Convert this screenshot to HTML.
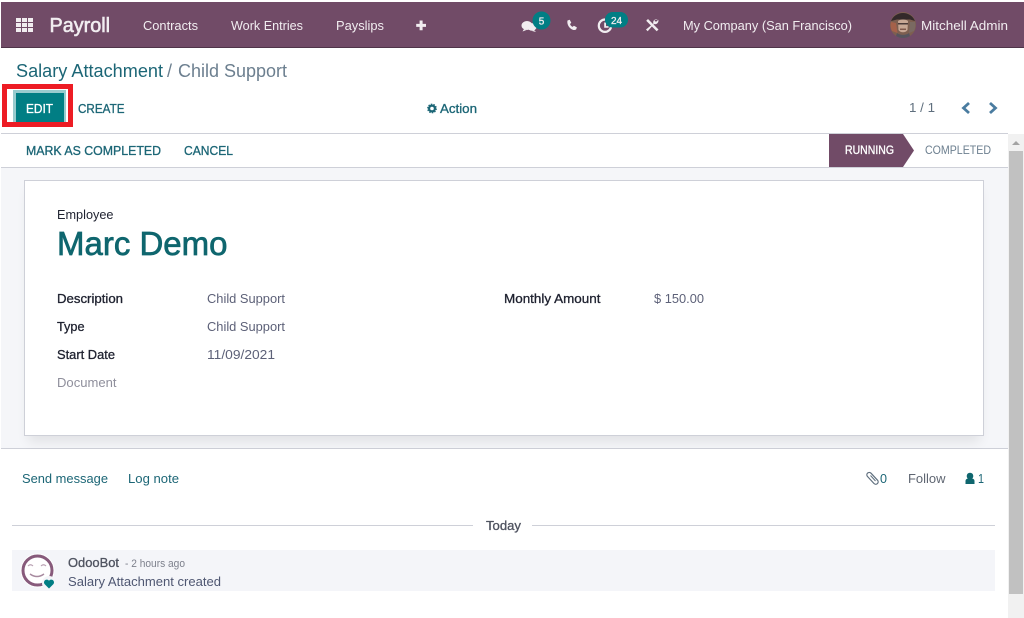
<!DOCTYPE html>
<html><head><meta charset="utf-8"><style>
html,body{margin:0;padding:0;background:#fff;width:1024px;height:618px;overflow:hidden}
svg{display:block}
text{font-family:"Liberation Sans",sans-serif;font-size:13px}
.m{stroke-width:.32px}
.t{fill:#1c6676;stroke:#1c6676}
.d{fill:#1f2230;stroke:#1f2230}
.w{fill:#fff;stroke:#fff}
.g{fill:#4f5360;stroke:#4f5360}
</style></head><body>
<svg width="1024" height="618" viewBox="0 0 1024 618" xmlns="http://www.w3.org/2000/svg">
<defs><filter id="s" x="-5%" y="-10%" width="110%" height="125%"><feGaussianBlur stdDeviation="6"/></filter></defs>
<rect width="1024" height="618" fill="#fff"/>
<!-- nav -->
<rect x="1" y="2" width="1023" height="45" fill="#714b67"/>
<rect x="1" y="47" width="1023" height="1" fill="#4f3449"/>
<g fill="#f1edf0">
<rect x="16" y="18" width="5" height="4"/><rect x="22" y="18" width="5" height="4"/><rect x="28" y="18" width="5" height="4"/>
<rect x="16" y="23" width="5" height="4"/><rect x="22" y="23" width="5" height="4"/><rect x="28" y="23" width="5" height="4"/>
<rect x="16" y="28" width="5" height="4"/><rect x="22" y="28" width="5" height="4"/><rect x="28" y="28" width="5" height="4"/>
</g>
<text x="49.5" y="32" style="font-size:20px;stroke-width:.6px" fill="#f1edf0" stroke="#f1edf0" textLength="60.5" lengthAdjust="spacingAndGlyphs">Payroll</text>
<g fill="#f1edf0">
<text x="143" y="30" textLength="55" lengthAdjust="spacingAndGlyphs" fill="#f1edf0">Contracts</text>
<text x="231" y="30" textLength="72" lengthAdjust="spacingAndGlyphs" fill="#f1edf0">Work Entries</text>
<text x="336" y="30" textLength="48" lengthAdjust="spacingAndGlyphs" fill="#f1edf0">Payslips</text>
<path d="M419.6 20.5h3v3.4h3.4v3h-3.4v3.4h-3v-3.4h-3.4v-3h3.4z"/>
<!-- chat -->
<ellipse cx="527" cy="25.5" rx="5.5" ry="4.5"/><path d="M524 29l-1.5 2.500 4-1.500z"/>
<ellipse cx="532" cy="27" rx="4.5" ry="3.700"/><path d="M534 30l2 2-4-1z"/>
<!-- phone -->
<path d="M567.500 20.500l2.200-.8 1.600 3-1.300 1.300c.5 1.400 1.300 2.300 2.600 2.900l1.300-1.200 3 1.700-.8 2.100c-1.500.9-3.500.6-5.400-.9-2.600-2-3.800-5.400-3.200-8.100z"/>
<!-- activity clock -->
<path d="M605 19.500a6.200 6.200 0 1 0 6.200 6.200" fill="none" stroke="#f1edf0" stroke-width="2.200"/>
<path d="M604.200 22.500h1.800v3.600h2.600v1.600h-4.400z"/>
<!-- tools -->
<path d="M646.500 20.500l1.500-1.500 10.500 10.500-1.800 1.800-10.500-10.500z"/>
<path d="M657.800 19.200a3.400 3.400 0 0 0-4.400 4.300l-7.400 6 1.700 1.700 6.300-7.200a3.400 3.400 0 0 0 4.300-4.200l-2 1.800-1.400-.4-.3-1.300z"/>
<text x="683" y="30" textLength="169" lengthAdjust="spacingAndGlyphs" fill="#f1edf0">My Company (San Francisco)</text>
<text x="921" y="30" textLength="87" lengthAdjust="spacingAndGlyphs" fill="#f1edf0">Mitchell Admin</text>
</g>
<!-- badges -->
<circle cx="541.5" cy="20.5" r="9" fill="#017e84"/>
<text x="541.5" y="24.5" style="font-size:10px;stroke-width:.3px" fill="#f1edf0" stroke="#f1edf0" text-anchor="middle">5</text>
<rect x="605" y="12" width="23" height="15.5" rx="7.700" fill="#017e84"/>
<text x="616.5" y="24" style="font-size:10px;stroke-width:.3px" fill="#f1edf0" stroke="#f1edf0" text-anchor="middle">24</text>
<!-- avatar -->
<circle cx="903" cy="25" r="13" fill="#7d5f50"/>
<path d="M891 21a13 13 0 0 1 24 0l-5-1.500h-13z" fill="#33292a"/>
<path d="M898 21c2-2 8-2 10 0l-.5 9c-2 3-7 3-9 0z" fill="#c7a794"/>
<path d="M892 31a13 13 0 0 1-1-9l5 1 1.500 10z" fill="#a5614a"/>
<path d="M914 31a13 13 0 0 0 1-9l-5 0-1 11z" fill="#7a6a62"/>
<path d="M897 33c3 2.500 9 2.500 12 0l1 3a13 13 0 0 1-14 0z" fill="#55545e"/>
<rect x="898" y="23" width="10" height="1.500" fill="#4a3a38"/>
<rect x="900" y="28.500" width="6" height="1.500" fill="#80594c"/>
<!-- breadcrumb -->
<text x="16" y="77" style="font-size:18px" fill="#1c6676" textLength="147" lengthAdjust="spacingAndGlyphs">Salary Attachment</text>
<text x="167" y="77" style="font-size:18px" fill="#6c7f8f">/</text>
<text x="178" y="77" style="font-size:18px" fill="#6c7f8f" textLength="109" lengthAdjust="spacingAndGlyphs">Child Support</text>
<!-- edit -->
<rect x="4.500" y="86.500" width="66" height="38" fill="#fff" stroke="#ed1c24" stroke-width="5"/>
<rect x="13" y="90" width="53" height="32" fill="#99cbce"/>
<rect x="16" y="93" width="48" height="29" fill="#017e84"/>
<text x="26" y="113" class="m w" style="font-size:13px" textLength="27" lengthAdjust="spacingAndGlyphs">EDIT</text>
<text x="78" y="113" class="m t" textLength="46.500" lengthAdjust="spacingAndGlyphs">CREATE</text>
<!-- action -->
<circle cx="432" cy="108.500" r="2.900" fill="none" stroke="#1c6676" stroke-width="2.200"/>
<circle cx="432" cy="108.500" r="4.300" fill="none" stroke="#1c6676" stroke-width="1.200" stroke-dasharray="1.500 1.200"/>
<text x="440" y="113" class="m t" textLength="37" lengthAdjust="spacingAndGlyphs">Action</text>
<!-- pager -->
<text x="909" y="112" fill="#5f6f7e" textLength="26" lengthAdjust="spacingAndGlyphs">1 / 1</text>
<path d="M969 103l-5.500 5 5.500 5" fill="none" stroke="#4a7ca0" stroke-width="2.800"/>
<path d="M990 103l5.500 5-5.500 5" fill="none" stroke="#4a7ca0" stroke-width="2.800"/>
<!-- status bar -->
<rect x="1" y="133" width="1007" height="1" fill="#ced0d8"/>
<rect x="1" y="167" width="1007" height="1" fill="#ced0d8"/>
<text x="26" y="155" class="m t" textLength="135" lengthAdjust="spacingAndGlyphs">MARK AS COMPLETED</text>
<text x="184" y="155" class="m t" textLength="49" lengthAdjust="spacingAndGlyphs">CANCEL</text>
<path d="M829 134h74l11 16.500-11 16.500h-74z" fill="#714b67"/>
<text x="845" y="154" class="m w" style="font-size:11.500px" textLength="49" lengthAdjust="spacingAndGlyphs">RUNNING</text>
<text x="925" y="154" fill="#6c7f8f" style="font-size:11.500px" textLength="66" lengthAdjust="spacingAndGlyphs">COMPLETED</text>
<!-- sheet bg -->
<rect x="1" y="168" width="1007" height="280" fill="#f5f6f9"/>
<rect x="1" y="448" width="1007" height="1" fill="#ced0d8"/>
<rect x="28" y="190" width="952" height="252" fill="#000" opacity=".08" filter="url(#s)"/>
<rect x="1" y="449" width="1007" height="169" fill="#fff"/>
<rect x="24.500" y="180.500" width="959" height="255" fill="#fff" stroke="#ced0d8"/>
<text x="57" y="219" fill="#1f2230" textLength="56.500" lengthAdjust="spacingAndGlyphs">Employee</text>
<text x="57" y="255" style="font-size:33px;stroke-width:.7px" fill="#0f666e" stroke="#0f666e" textLength="170.500" lengthAdjust="spacingAndGlyphs">Marc Demo</text>
<text x="57" y="303" class="m d" textLength="66" lengthAdjust="spacingAndGlyphs">Description</text>
<text x="57" y="331" class="m d" textLength="27.500" lengthAdjust="spacingAndGlyphs">Type</text>
<text x="57" y="359" class="m d" textLength="58" lengthAdjust="spacingAndGlyphs">Start Date</text>
<text x="57" y="387" fill="#8f8f9c" textLength="59.500" lengthAdjust="spacingAndGlyphs">Document</text>
<text x="207" y="303" fill="#5d6178" textLength="78" lengthAdjust="spacingAndGlyphs">Child Support</text>
<text x="207" y="331" fill="#5d6178" textLength="78" lengthAdjust="spacingAndGlyphs">Child Support</text>
<text x="207" y="359" fill="#5d6178" textLength="68" lengthAdjust="spacingAndGlyphs">11/09/2021</text>
<text x="504" y="303" class="m d" textLength="96.500" lengthAdjust="spacingAndGlyphs">Monthly Amount</text>
<text x="654" y="303" fill="#5d6178" textLength="50" lengthAdjust="spacingAndGlyphs">$ 150.00</text>
<!-- chatter -->
<text x="22" y="483" fill="#1c6676" textLength="86" lengthAdjust="spacingAndGlyphs">Send message</text>
<text x="128" y="483" fill="#1c6676" textLength="51" lengthAdjust="spacingAndGlyphs">Log note</text>
<path d="M867.500 476.500l6.500 7a2.400 2.400 0 0 0 3.500-3.300l-6.500-7a2 2 0 0 0-3.500 3.300z" fill="none" stroke="#5f6f7e" stroke-width="1.200"/>
<path d="M870.500 475.500l5 5.500" fill="none" stroke="#5f6f7e" stroke-width="1"/>
<text x="880" y="483" fill="#1c6676" textLength="7" lengthAdjust="spacingAndGlyphs">0</text>
<text x="908" y="483" fill="#5f6672" textLength="37.500" lengthAdjust="spacingAndGlyphs">Follow</text>
<circle cx="970" cy="476" r="3.300" fill="#0f666e"/>
<path d="M965.500 484v-3c0-1.600 1.500-2.500 2.800-2.500h3.400c1.300 0 2.800.9 2.800 2.500v3z" fill="#0f666e"/>
<text x="978" y="483" fill="#1c6676" textLength="6" lengthAdjust="spacingAndGlyphs">1</text>
<rect x="12" y="525" width="461" height="1" fill="#ced0d8"/>
<rect x="532" y="525" width="463" height="1" fill="#ced0d8"/>
<text x="486" y="530" class="m g" textLength="35" lengthAdjust="spacingAndGlyphs">Today</text>
<rect x="12" y="550" width="983" height="41" fill="#f4f5f9"/>
<circle cx="37.500" cy="570.500" r="17" fill="#fff"/>
<circle cx="37.500" cy="570.500" r="14.500" fill="none" stroke="#875a7b" stroke-width="3"/>
<path d="M28 566q2.500-2.500 5 0M41 566q2.500-2.500 5 0" fill="none" stroke="#b9a0b2" stroke-width="1.200"/>
<path d="M30 574q7 5 14 0" fill="none" stroke="#a78a9f" stroke-width="1.400"/>
<circle cx="49" cy="583" r="7" fill="#f4f5f9"/>
<path d="M49 588.500l-4.500-4.500a2.700 2.700 0 0 1 4.500-3.200 2.700 2.700 0 0 1 4.500 3.200z" fill="#017e84"/>
<text x="68" y="567" class="m g" textLength="51" lengthAdjust="spacingAndGlyphs">OdooBot</text>
<text x="125" y="567" fill="#7d808c" style="font-size:11px" textLength="60" lengthAdjust="spacingAndGlyphs">- 2 hours ago</text>
<text x="68" y="586" fill="#4f5772" textLength="153" lengthAdjust="spacingAndGlyphs">Salary Attachment created</text>
<!-- scrollbar -->
<rect x="1008" y="134" width="16" height="484" fill="#f1f1f1"/>
<rect x="1009" y="151" width="14" height="443" fill="#c1c1c1"/>
<path d="M1012 145l4-4 4 4z" fill="#a3a3a3"/>
</svg>
</body></html>
